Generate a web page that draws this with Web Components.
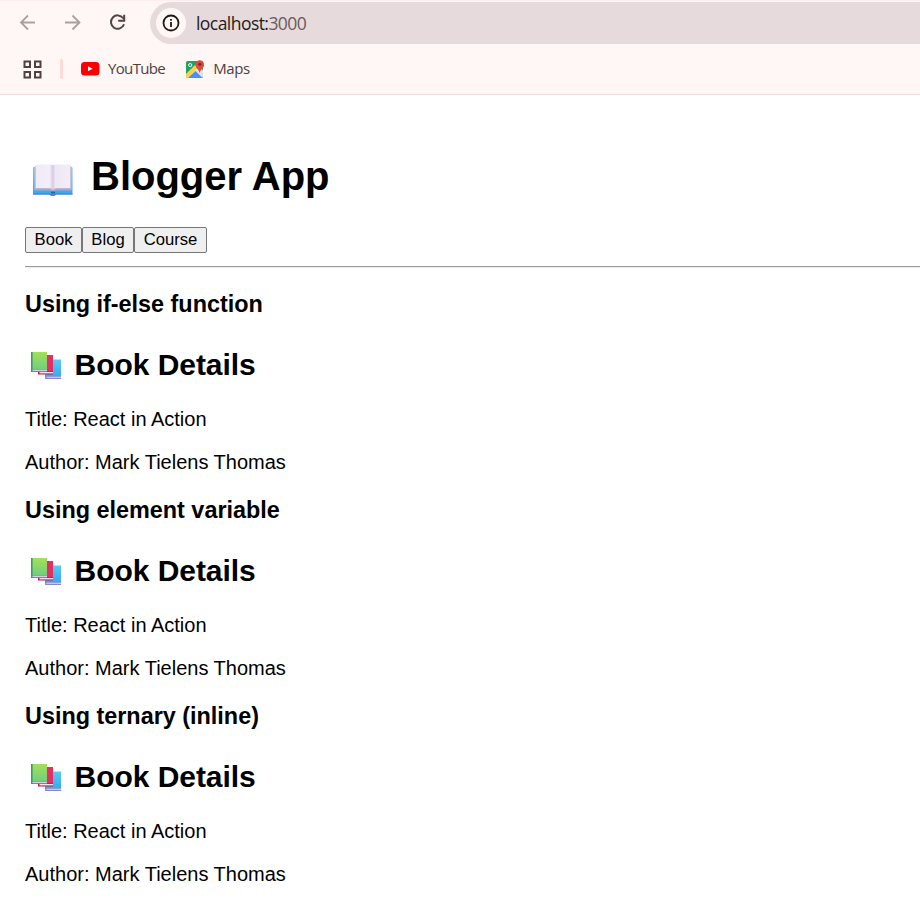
<!DOCTYPE html>
<html lang="en"><head><meta charset="utf-8"><title>Blogger App</title>
<style>html,body{margin:0;background:#fff}body{font-family:"Liberation Sans",Arial,sans-serif;color:#000;height:912px;overflow:hidden}</style></head>
<body>
<browser-bar></browser-bar>
<blogger-app>
<book-details heading="Using if-else function"></book-details>
<book-details heading="Using element variable"></book-details>
<book-details heading="Using ternary (inline)"></book-details>
</blogger-app>
<script>
const define=(name,html)=>customElements.define(name,class extends HTMLElement{
  constructor(){super();this.attachShadow({mode:'open'}).innerHTML=html;}
});
define('tool-icons',`<style>:host{display:flex;height:46px;align-items:center;padding-left:17px;gap:23px}svg{display:block;flex:none}</style>
<svg width="22" height="22" fill="none" stroke="#aaa19f" stroke-width="1.8"><path d="M18 10.500H4M11 3.500l-7 7 7 7"/></svg>
<svg width="22" height="22" fill="none" stroke="#aaa19f" stroke-width="1.8"><path d="M3 10.500h14M10.500 3.500l7 7-7 7"/></svg>
<svg width="22" height="22" fill="none" stroke="#574341" stroke-width="2"><path d="M16.200 6.300A6.700 6.700 0 1 0 17 12.200M17.200 2.800v6h-6"/></svg>`);
define('address-field',`<style>:host{display:flex;flex:1;height:42px;margin-top:2px;background:#e6dadc;border-radius:21px 0 0 21px;align-items:center;padding-left:6px;box-sizing:border-box}
i{width:30px;height:30px;border-radius:50%;background:#fff7f6;display:grid;place-items:center}
span{margin-left:10px;font:17.500px/24px "Open Sans","Noto Sans",sans-serif;letter-spacing:-.55px;color:#251b1b;white-space:nowrap}b{font-weight:400;color:#6a5b5b}</style>
<i><svg width="18" height="18" fill="none" stroke="#231918" stroke-width="1.800"><circle cx="9" cy="9" r="7.500"/><path d="M9 8v5M9 5v1.800"/></svg></i><span>localhost:<b>3000</b></span>`);
define('bookmark-row',`<style>:host{display:flex;height:50px;align-items:center;padding-left:23px;font:15px/20px "Open Sans","Noto Sans",sans-serif;color:#4c4140}
svg{display:block;flex:none}.bar{width:3px;height:20px;border-radius:2px;background:#ffdad6;margin:0 18px 0 18px}span{margin:-2px 0 0 8px;letter-spacing:-.65px}.m{margin-left:21px;margin-top:-1px}</style>
<svg width="19" height="19" fill="none" stroke="#51403f" stroke-width="2"><path d="M1.500 1.500h5.500v5.500h-5.500zM12 1.500h5.500v5.500h-5.500zM1.500 12h5.500v5.500h-5.500zM12 12h5.500v5.500h-5.500z"/></svg>
<div class="bar"></div>
<svg width="19" height="20"><rect y="3" width="18.500" height="13.500" rx="3.500" fill="#f00"/><path d="M7 7.200v5l4.600-2.500z" fill="#fff"/></svg><span>YouTube</span>
<svg class="m" width="19" height="20"><rect x="0" y="2" width="17" height="17" rx="1.500" fill="#20a464"/><path d="M0 18L12 6l5 5.500v6L15.500 19H1z" fill="#dfe4e6"/><path d="M0 15L9 6l3 2.500L2 19 0 18z" fill="#fdd14b"/><path d="M2 19l7.500-7 7 7z" fill="#4c8df6"/><circle cx="4.200" cy="6.100" r="1.600" fill="none" stroke="#fff"/><path d="M13.500 14.500c0-4-4-4.800-4-9a4.300 4.300 0 1 1 8.600 0c0 4.200-4.200 5-4.600 9z" fill="#e04b40"/><circle cx="13.900" cy="5.300" r="1.500" fill="#7d252a"/></svg><span style="letter-spacing:-.35px">Maps</span>`);
define('browser-bar',`<style>:host{display:block;height:95px;box-sizing:border-box;background:#fff7f6;border-bottom:1px solid #f3dcda;box-shadow:inset 0 1px #fceeed}.top{display:flex;height:44px}tool-icons{width:133px}</style>
<div class="top"><tool-icons></tool-icons><address-field></address-field></div><bookmark-row></bookmark-row>`);
define('open-book',`<style>:host{display:block}svg{display:block}</style>
<svg width="42" height="34"><defs><linearGradient id="c" x2="0" y2="1"><stop stop-color="#74c9ec"/><stop offset="1" stop-color="#35a3ef"/></linearGradient><linearGradient id="p"><stop stop-color="#efebf7"/><stop offset=".4" stop-color="#f3eef8"/><stop offset=".5" stop-color="#d5cae3"/><stop offset=".56" stop-color="#eee7f5"/><stop offset="1" stop-color="#f2edf8"/></linearGradient></defs>
<path d="M2 4h37.500q1 0 1 1v26.500H24c-1 2-5.500 2-6.500 0H1V5q0-1 1-1z" fill="url(#c)"/><path d="M1 31h16.500q3.500 2 6.500 0h16.500" fill="none" stroke="#4776cf" stroke-width="1.200"/><path d="M2.500 4.500q0-1.500 1.500-1.500h34q1.500 0 1.500 1.500V27h-37z" fill="#cdc2d9"/><path d="M3 25.500h15l3 2 3-2h15v2H24l-3 2-3-2H3z" fill="#b3a5c5"/><path d="M4 2.500q0-1 1-1h14q2 0 2 1 0-1 2-1h14q1 0 1 1V25H24q-3 0-3 2 0-2-3-2H4z" fill="url(#p)"/><path d="M19 28.500h4v2h-4z" fill="#27659d"/></svg>`);
define('book-stack',`<style>:host{display:block}svg{display:block}</style>
<svg width="32" height="29"><defs><linearGradient id="g" x2="0" y2="1"><stop stop-color="#a4df59"/><stop offset="1" stop-color="#6fce80"/></linearGradient><linearGradient id="b" x2="0" y2="1"><stop stop-color="#5acbf1"/><stop offset="1" stop-color="#39a5f0"/></linearGradient></defs>
<path d="M15 8.500h16v18H15z" fill="url(#b)"/><path d="M15.500 25.500h15.500v2.500H15z" fill="#8a86cf"/><path d="M16.500 25.700H31v1.300H16.500z" fill="#cfc5ea"/>
<path d="M8 4h15v17H8z" fill="#e32f63"/><path d="M8 20h15v3.500H8z" fill="#bd2053"/><path d="M9.500 21h13.500v1.400H9.500z" fill="#eee3ef"/>
<path d="M1 1h16v18H1z" fill="url(#g)"/><path d="M1 1h1.600v20H1z" fill="#3d9b67"/><path d="M1 18h16v3H1z" fill="#548a80"/><path d="M2.500 18.600h14.500v1.500H2.500z" fill="#d5d3e5"/></svg>`);
define('blogger-app',`<style>:host{display:block;padding:58px 0 0 25px}h1{font-size:40px;line-height:46px;margin:0 0 28px;display:flex;gap:17px;padding-left:7px}open-book{margin-top:10px}
nav{display:flex;height:26px}button{font:16.667px/20px "Liberation Sans",Arial,sans-serif;color:#000;background:#efefef;border:1px solid #767676;border-radius:2px;margin:0;padding:0 0 1px;width:57px}button:nth-child(2){width:52px}button:nth-child(3){width:73px}
hr{height:0;margin:13px 0 23px;border:0;border-top:1px solid #9a9a9a;border-bottom:1px solid #eee}</style>
<h1><open-book></open-book><span>Blogger App</span></h1><nav><button>Book</button><button>Blog</button><button>Course</button></nav><hr><slot></slot>`);
customElements.define('book-details',class extends HTMLElement{
  connectedCallback(){
    this.attachShadow({mode:'open'}).innerHTML=`<style>:host{display:block;height:206px}h3{font-size:23.4px;line-height:27px;margin:0 0 30px}h2{font-size:30px;line-height:34px;margin:0 0 26px;padding-left:5px;display:flex;gap:12.500px;letter-spacing:-.04px}book-stack{margin-top:3px}p{font-size:20px;line-height:23px;margin:0 0 20px}</style>
<h3></h3><h2><book-stack></book-stack><span>Book Details</span></h2><p>Title: React in Action</p><p>Author: Mark Tielens Thomas</p>`;
    this.shadowRoot.querySelector('h3').textContent=this.getAttribute('heading');
  }
});
</script></body></html>
